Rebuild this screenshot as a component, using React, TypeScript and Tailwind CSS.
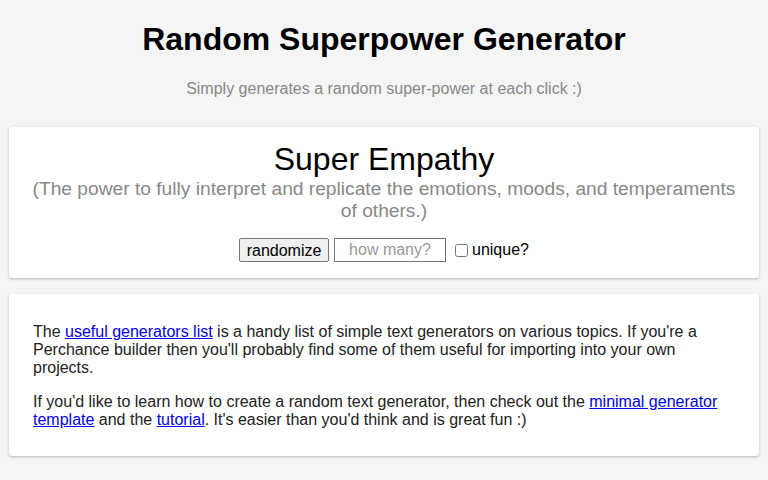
import React from 'react';

const font = { fontFamily: '"Liberation Sans", Arial, sans-serif' };

function Output() {
  return (
    <div className="mx-[9px] mt-[29px] rounded-[3px] bg-white px-[20px] pt-[14px] pb-[16px] text-center shadow-[0_1px_3px_rgba(0,0,0,0.25)]">
      <div className="text-[32px] leading-[37px] text-black">Super Empathy</div>
      <div className="text-[19.2px] leading-[22px] text-[#888]">
        (The power to fully interpret and replicate the emotions, moods, and temperaments of others.)
      </div>
      <div className="mt-[16px] flex items-center justify-center text-[16px]">
        <button className="h-[24px] w-[90px] rounded-[2px] border border-[#767676] bg-[#efefef] text-[16px] text-black">
          randomize
        </button>
        <input
          placeholder="how many?"
          className="ml-[5px] h-[24px] w-[112px] border border-[#767676] bg-white text-center text-[16px] placeholder:text-[#999]"
        />
        <input type="checkbox" className="ml-[9px] h-[13px] w-[13px]" />
        <span className="ml-[4px] text-black">unique?</span>
      </div>
    </div>
  );
}

function About() {
  return (
    <div className="mx-[9px] mt-[16px] space-y-[16px] rounded-[3px] bg-white px-[24px] pt-[29px] pb-[27px] text-[16px] leading-[18px] text-[#222] shadow-[0_1px_3px_rgba(0,0,0,0.25)]">
      <p>
        The <a href="#" className="text-[#0000ee] underline">useful generators list</a> is a handy list of simple text
        generators on various topics. If you're a Perchance builder then you'll probably find some of them useful for
        importing into your own projects.
      </p>
      <p>
        If you'd like to learn how to create a random text generator, then check out the{' '}
        <a href="#" className="text-[#0000ee] underline">minimal generator template</a> and the{' '}
        <a href="#" className="text-[#0000ee] underline">tutorial</a>. It's easier than you'd think and is great fun :)
      </p>
    </div>
  );
}

export default function App() {
  return (
    <div className="min-h-[480px] bg-[#f5f5f5] pb-6" style={font}>
      <h1 className="pt-[21px] text-center text-[32px] leading-[37px] font-bold text-black">
        Random Superpower Generator
      </h1>
      <p className="mt-[22px] text-center text-[16px] leading-[18px] text-[#888]">
        Simply generates a random super-power at each click :)
      </p>
      <Output />
      <About />
    </div>
  );
}
